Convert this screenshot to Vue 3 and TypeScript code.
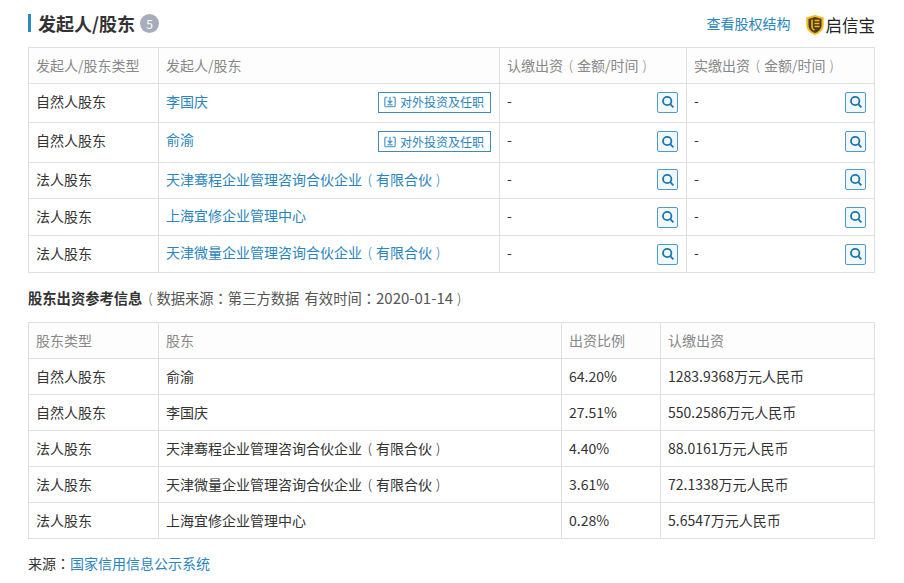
<script setup lang="ts">
interface Row { type: string; name: string; action: boolean; tall: string }
interface Part { text: string; cls: string }
const rows: Row[] = [
  { type: '自然人股东', name: '李国庆', action: true, tall: 'r39' },
  { type: '自然人股东', name: '俞渝', action: true, tall: 'r40' },
  { type: '法人股东', name: '天津骞程企业管理咨询合伙企业（有限合伙）', action: false, tall: 'r36a' },
  { type: '法人股东', name: '上海宜修企业管理中心', action: false, tall: 'r37' },
  { type: '法人股东', name: '天津微量企业管理咨询合伙企业（有限合伙）', action: false, tall: 'r37' },
]
const refs = [
  ['自然人股东', '俞渝', '64.20%', '1283.9368万元人民币'],
  ['自然人股东', '李国庆', '27.51%', '550.2586万元人民币'],
  ['法人股东', '天津骞程企业管理咨询合伙企业（有限合伙）', '4.40%', '88.0161万元人民币'],
  ['法人股东', '天津微量企业管理咨询合伙企业（有限合伙）', '3.61%', '72.1338万元人民币'],
  ['法人股东', '上海宜修企业管理中心', '0.28%', '5.6547万元人民币'],
]
const firstHeads = ['认缴出资（金额/时间）', '实缴出资（金额/时间）']

// Full-width brackets sit centred in their em box in the reference.
function parts(s: string): Part[] {
  return s
    .split(/([（）])/)
    .filter((t) => t.length > 0)
    .map((t) => ({ text: t, cls: t === '（' ? 'po' : t === '）' ? 'pc' : '' }))
}
</script>

<template>
  <div class="page">
    <header class="head">
      <div class="title-wrap">
        <h2 class="title">发起人/股东</h2>
        <span class="count">5</span>
      </div>
      <div class="head-right">
        <a class="link head-link">查看股权结构</a>
        <div class="brand">
          <svg width="18" height="22" viewBox="1 0.500 18 21">
            <path d="M10 1 L18.700 3.500 V11 C18.700 16 14.500 19.500 10 21 C5.500 19.500 1.300 16 1.300 11 V3.500 Z" fill="#f5b91e" />
            <path d="M10 3 L16.500 5 V11 C16.500 15 13.500 17.800 10 19 C6.500 17.800 3.500 15 3.500 11 V5 Z" fill="#4a3c1c" />
            <path d="M7 5.500 V13 C7 14.500 8 15.500 9.500 16.200" fill="none" stroke="#f5b91e" stroke-width="1.600" />
            <path d="M9.500 6.500 H14.500 M9.500 9.500 H14.500 M9.500 12.500 H14.500" stroke="#f5b91e" stroke-width="1.600" />
          </svg>
          <span class="brand-text">启信宝</span>
        </div>
      </div>
    </header>

    <table class="grid">
      <colgroup>
        <col class="c130" /><col class="c341" /><col class="c187" /><col />
      </colgroup>
      <thead>
        <tr>
          <th>发起人/股东类型</th>
          <th>发起人/股东</th>
          <th v-for="h in firstHeads" :key="h"><span v-for="(p, i) in parts(h)" :key="i" :class="p.cls">{{ p.text }}</span></th>
        </tr>
      </thead>
      <tbody>
        <tr v-for="r in rows" :key="r.name" :class="r.tall">
          <td>{{ r.type }}</td>
          <td>
            <div class="split">
              <a class="link"><span v-for="(p, i) in parts(r.name)" :key="i" :class="p.cls">{{ p.text }}</span></a>
              <button v-if="r.action" class="action">
                <svg width="12" height="12" viewBox="0 0 14 14" fill="none" stroke="#3f8fc4" stroke-width="1.300">
                  <path d="M4 1.500 H2 A1 1 0 0 0 1 2.500 V11.500 A1 1 0 0 0 2 12.500 H12 A1 1 0 0 0 13 11.500 V2.500 A1 1 0 0 0 12 1.500 H10" />
                  <path d="M7 1 V8 M4.300 5.500 L7 8.300 L9.700 5.500" />
                  <path d="M4 10.300 H10" />
                </svg>
                对外投资及任职
              </button>
            </div>
          </td>
          <td v-for="n in 2" :key="n">
            <div class="split">
              <span>-</span>
              <button class="search" aria-label="查看">
                <svg width="14" height="14" viewBox="0 0 14 14" fill="none" stroke="#1c76ad" stroke-width="1.800">
                  <circle cx="6.200" cy="6" r="4.200" />
                  <path d="M9.300 9.200 L12.400 12.400" />
                </svg>
              </button>
            </div>
          </td>
        </tr>
      </tbody>
    </table>

    <p class="note"><strong>股东出资参考信息</strong><span class="po">（</span>数据来源<span class="colon">：</span>第三方数据 有效时间<span class="colon">：</span><span class="date">2020-01-14</span><span class="pc">）</span></p>

    <table class="grid">
      <colgroup>
        <col class="c130" /><col class="c403" /><col class="c99" /><col />
      </colgroup>
      <thead>
        <tr>
          <th>股东类型</th>
          <th>股东</th>
          <th>出资比例</th>
          <th>认缴出资</th>
        </tr>
      </thead>
      <tbody>
        <tr v-for="r in refs" :key="r[1]" class="r36">
          <td v-for="c in r" :key="c"><span v-for="(p, i) in parts(c)" :key="i" :class="p.cls">{{ p.text }}</span></td>
        </tr>
      </tbody>
    </table>

    <p class="source">来源<span class="colon">：</span><a class="link">国家信用信息公示系统</a></p>
  </div>
</template>

<style>
html, body { margin: 0; background: #fff; }
</style>

<style scoped>
.page {
  width: 847px;
  padding: 0 0 0 28px;
  font-family: "Noto Sans CJK SC", "Noto Sans", sans-serif;
  font-size: 14px;
  color: #333;
  text-spacing-trim: space-all;
}
.head {
  height: 47px;
  display: flex;
  justify-content: space-between;
  align-items: flex-start;
}
.title-wrap {
  margin-top: 14px;
  display: flex;
  align-items: center;
  height: 18px;
  border-left: 3px solid #2a88c6;
  padding-left: 7px;
}
.title { margin: 0; font-size: 18px; font-weight: 700; color: #333; line-height: 18px; }
.count {
  margin-left: 5px;
  width: 19px;
  height: 19px;
  border-radius: 50%;
  background: #a8adbb;
  color: #fff;
  font-size: 12px;
  line-height: 19px;
  text-align: center;
}
.head-right { display: flex; align-items: center; height: 24px; margin-top: 13px; }
.link { color: #2a85bd; text-decoration: none; }
.head-link { margin-bottom: 4px; }
.brand { display: flex; align-items: center; margin-left: 15px; }
.brand-text { font-size: 16.500px; color: #222; margin-left: 2px; }
.grid {
  width: 847px;
  table-layout: fixed;
  border-collapse: collapse;
  line-height: 20px;
}
.c130 { width: 130px; }
.c341 { width: 341px; }
.c187 { width: 187px; }
.c403 { width: 403px; }
.c99 { width: 99px; }
th, td {
  border: 1px solid #e0e0e0;
  padding: 0 8px 2px 7px;
  text-align: left;
  font-weight: 400;
  white-space: nowrap;
}
th { height: 33px; color: #888; background: #fdfdfd; }
.r39 td { height: 34px; padding-bottom: 4px; }
.r40 td { height: 33px; padding-bottom: 6px; }
.r37 td { height: 34px; }
.r36a td { height: 31px; padding-bottom: 4px; }
.r36 td { height: 33px; }
.split { display: flex; justify-content: space-between; align-items: center; }
.split > span { margin-bottom: 2px; }
.r37 .split > a, .r40 .split > a { margin-bottom: 2px; }
.action {
  display: flex;
  align-items: center;
  gap: 4px;
  width: 113px;
  height: 21px;
  margin-top: 2px;
  padding: 0 0 0 5px;
  box-sizing: border-box;
  border: 1px solid #3f8bb8;
  background: #fff;
  color: #2a85bd;
  font: inherit;
  font-size: 12px;
  white-space: nowrap;
}
.search {
  width: 21px;
  height: 21px;
  margin-top: 2px;
  padding: 0;
  box-sizing: border-box;
  border: 1px solid #4f9bc9;
  border-radius: 2px;
  background: #f1f8fc;
  display: flex;
  align-items: center;
  justify-content: center;
}
.r40 .action, .r40 .search { margin-top: 4px; }
.po, .pc {
  display: inline-block;
  font-size: 10px;
  line-height: 1;
  transform: translateY(-2px) scaleY(1.400);
}
.po { margin-right: 4px; }
.pc { margin-left: 4px; }
.note { margin: 14px 0 0; height: 35px; line-height: 21px; font-size: 14.300px; word-spacing: 2px; color: #555; white-space: nowrap; }
.note strong { color: #333; font-size: 14.300px; }
.colon { font-family: "Noto Sans CJK TC", sans-serif; }
.date { font-size: 15px; }
.source { margin: 14px 0 0; line-height: 21px; color: #333; }
</style>
